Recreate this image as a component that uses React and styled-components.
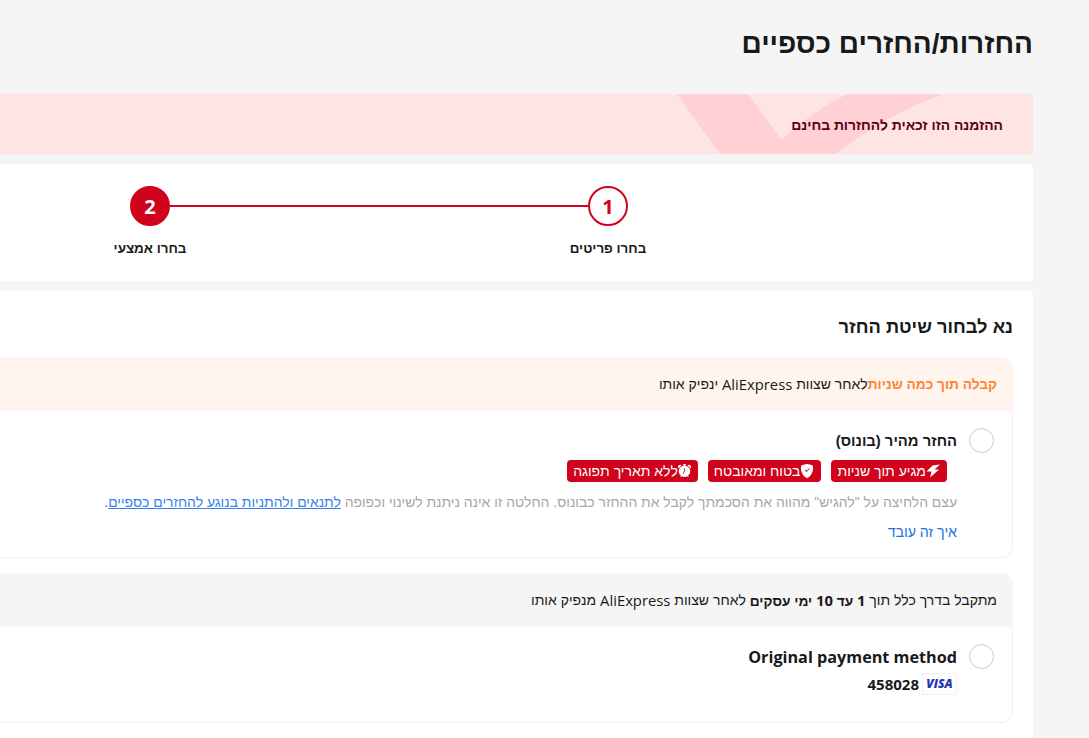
import React from "react";
import styled, { createGlobalStyle } from "styled-components";
import { BsShieldFillCheck, BsAlarmFill } from "react-icons/bs";

const GlobalStyle = createGlobalStyle`
  html, body {
    margin: 0;
    padding: 0;
    height: 100%;
    overflow: hidden;
    background: #f5f5f5;
  }
  * { box-sizing: border-box; }
`;

function Bolt() {
  return (
    <svg width="14" height="14" viewBox="0 0 14 14" fill="currentColor">
      <path d="M14 .5 L6.5 1.5 L.5 7.5 L5.5 7.5 L4 13.5 L13 5.5 L8.5 5.5 Z" />
    </svg>
  );
}

function Ribbon() {
  return (
    <BannerArt viewBox="0 0 356 60" width="356" height="60">
      <path d="M0 0 L43 60 L159 60 C190 36 225 15 266 0 L171 0 C148 10 125 27 105 46 L71 0 Z" fill="#ffd0d4" />
    </BannerArt>
  );
}

export default function App() {
  return (
    <Page dir="rtl">
      <GlobalStyle />
      <Main>
        <Title>החזרות/החזרים כספיים</Title>
        <Banner>
          <Ribbon />
          <BannerText>ההזמנה הזו זכאית להחזרות בחינם</BannerText>
        </Banner>
        <StepCard>
          <Steps>
            <Circle>1</Circle>
            <Line />
            <Circle $active>2</Circle>
            <StepLabel>בחרו פריטים</StepLabel>
            <span />
            <StepLabel>בחרו אמצעי</StepLabel>
          </Steps>
        </StepCard>
        <MethodCard>
          <Heading>נא לבחור שיטת החזר</Heading>
          <Option>
            <OptionHead $tone="#fff5ee">
              <Orange>קבלה תוך כמה שניות</Orange>לאחר שצוות <Latin>AliExpress</Latin> ינפיק אותו
            </OptionHead>
            <OptionBody>
              <Radio />
              <OptionInfo>
                <OptionTitle>החזר מהיר (בונוס)</OptionTitle>
                <Tags>
                  <Tag><Bolt />מגיע תוך שניות</Tag>
                  <Tag><BsShieldFillCheck size={14} />בטוח ומאובטח</Tag>
                  <Tag><BsAlarmFill size={13} />ללא תאריך תפוגה</Tag>
                </Tags>
                <Desc>
                  עצם הלחיצה על "להגיש" מהווה את הסכמתך לקבל את ההחזר כבונוס. החלטה זו אינה ניתנת לשינוי וכפופה <TermsLink>לתנאים ולהתניות בנוגע להחזרים כספיים</TermsLink><Dot>.</Dot>
                </Desc>
                <HowLink>איך זה עובד</HowLink>
              </OptionInfo>
            </OptionBody>
          </Option>
          <Option>
            <OptionHead $tone="#f5f5f5">
              מתקבל בדרך כלל תוך <b><Latin>1</Latin> עד <Latin>10</Latin> ימי עסקים</b> לאחר שצוות <Latin>AliExpress</Latin> מנפיק אותו
            </OptionHead>
            <OptionBody $short>
              <Radio />
              <OptionInfo>
                <LatinTitle>Original payment method</LatinTitle>
                <CardRow>
                  <Visa>VISA</Visa>
                  <CardNum>458028</CardNum>
                </CardRow>
              </OptionInfo>
            </OptionBody>
          </Option>
        </MethodCard>
      </Main>
    </Page>
  );
}

const Page = styled.div`
  width: 1089px;
  height: 738px;
  overflow: hidden;
  padding-right: 56px;
  font-family: "Liberation Sans", "Open Sans", sans-serif;
  color: #191919;
`;

const Latin = styled.span`
  font-family: "Open Sans", sans-serif;
  font-size: 14.8px;
`;

const Main = styled.div`
  width: 1300px;
`;

const Title = styled.h1`
  margin: 0;
  height: 94px;
  padding-top: 25px;
  font-size: 28px;
  line-height: 37px;
  font-weight: 700;
`;

const Banner = styled.div`
  position: relative;
  height: 60px;
  background: #ffe4e4;
  display: flex;
  align-items: center;
  padding-right: 30px;
  margin-bottom: 10px;
`;

const BannerArt = styled.svg`
  position: absolute;
  top: 0;
  right: 0;
`;

const BannerText = styled.div`
  position: relative;
  font-size: 13.9px;
  font-weight: 700;
  color: #5c0014;
  padding-top: 2px;
`;

const StepCard = styled.div`
  height: 117px;
  background: #fff;
  border-radius: 4px;
  margin-bottom: 10px;
  padding: 22px 405px 0 0;
`;

const Steps = styled.div`
  display: grid;
  grid-template-columns: 40px 418px 40px;
  grid-template-rows: 40px auto;
  row-gap: 14px;
  align-items: center;
`;

const Circle = styled.div`
  width: 40px;
  height: 40px;
  border-radius: 50%;
  border: 2px solid #d0021c;
  background: ${(p) => (p.$active ? "#d0021c" : "#fff")};
  color: ${(p) => (p.$active ? "#fff" : "#d0021c")};
  display: flex;
  align-items: center;
  justify-content: center;
  font-family: "Open Sans", sans-serif;
  font-size: 20px;
  font-weight: 700;
`;

const Line = styled.div`
  height: 2px;
  background: #d0021c;
`;

const StepLabel = styled.div`
  justify-self: center;
  white-space: nowrap;
  font-size: 13.4px;
  line-height: 18px;
  font-weight: 700;
`;

const MethodCard = styled.div`
  background: #fff;
  border-radius: 4px;
  padding: 23px 20px 20px 0;
`;

const Heading = styled.h2`
  margin: 0 0 17px;
  font-size: 18.3px;
  line-height: 26px;
  font-weight: 700;
`;

const Option = styled.div`
  margin-bottom: 15px;
`;

const OptionHead = styled.div`
  height: 53.5px;
  background: ${(p) => p.$tone};
  border-radius: 12px 12px 0 0;
  padding: 0.5px 16px 0;
  display: flex;
  align-items: center;
  font-size: 14px;
  white-space: pre-wrap;

  b {
    font-size: 13.7px;
    font-weight: 700;
  }
`;

const Orange = styled.span`
  color: #fd8432;
  font-size: 13.7px;
  font-weight: 700;
`;

const OptionBody = styled.div`
  display: flex;
  gap: 12px;
  height: ${(p) => (p.$short ? "96px" : "147.5px")};
  padding: 17px 18px 0 0;
  border: 1px solid #f0f0f0;
  border-top: 0;
  border-bottom-right-radius: 12px;
`;

const Radio = styled.span`
  flex: none;
  width: 25px;
  height: 25px;
  border-radius: 50%;
  border: 1px solid #ccc;
  background: #fff;
`;

const OptionInfo = styled.div`
  display: flex;
  flex-direction: column;
  align-items: flex-start;
  padding-top: 1px;
`;

const OptionTitle = styled.div`
  font-size: 14.8px;
  line-height: 25px;
  font-weight: 700;
`;

const LatinTitle = styled(OptionTitle)`
  font-family: "Open Sans", sans-serif;
  font-size: 16.2px;
`;

const Tags = styled.div`
  display: flex;
  gap: 10px;
  margin: 6px 10px 0 0;
`;

const Tag = styled.span`
  display: inline-flex;
  align-items: center;
  height: 22px;
  padding: 0 7px 0 6px;
  border-radius: 4px;
  background: #d0021c;
  color: #fff;
  font-size: 14px;
`;

const Desc = styled.div`
  margin-top: 7px;
  width: 1000px;
  font-size: 13.93px;
  line-height: 26px;
  color: #a6a6a6;
`;

const TermsLink = styled.a`
  color: #3a7fec;
  text-decoration: underline;
`;

const Dot = styled.span`
  color: #666;
`;

const HowLink = styled.a`
  margin-top: 6px;
  font-size: 14.2px;
  line-height: 22px;
  color: #1a6fe8;
`;

const CardRow = styled.div`
  display: flex;
  align-items: center;
  gap: 3px;
  margin-top: 3px;
`;

const Visa = styled.span`
  width: 35px;
  height: 22px;
  border: 1px solid #f0f0f0;
  display: flex;
  align-items: center;
  justify-content: center;
  font-family: "Open Sans", sans-serif;
  font-size: 12px;
  font-weight: 800;
  font-style: italic;
  color: #2335b0;
`;

const CardNum = styled.span`
  font-family: "Open Sans", sans-serif;
  font-size: 15px;
  font-weight: 700;
`;
